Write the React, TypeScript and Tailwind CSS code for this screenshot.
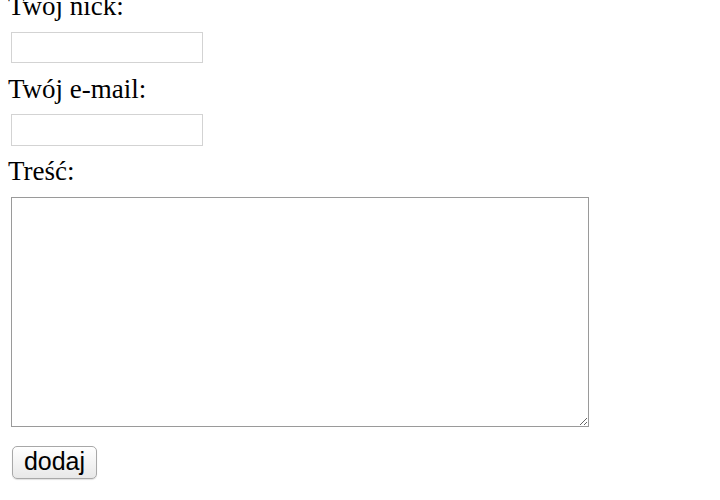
const App = () => {
  return (
    <div className="w-[720px] h-[500px] overflow-hidden bg-white">
      <form className="flex flex-col items-start mt-[-9px] text-[27px] text-black font-['Liberation_Serif','Times_New_Roman',serif]">
        <label className="h-[30px] leading-[30px] pl-[8px]">Twój nick:</label>
        <input
          type="text"
          className="mt-[11px] ml-[11px] w-[192px] h-[31px] border border-[#d3d3d3] bg-white outline-none"
        />
        <label className="mt-[11px] h-[30px] leading-[30px] pl-[8px]">Twój e-mail:</label>
        <input
          type="text"
          className="mt-[10px] ml-[11px] w-[192px] h-[32px] border border-[#d3d3d3] bg-white outline-none"
        />
        <label className="mt-[10px] h-[30px] leading-[30px] pl-[8px]">Treść:</label>
        <textarea className="mt-[11px] ml-[11px] w-[578px] h-[230px] border border-[#9a9a9a] bg-white outline-none resize" />
        <button
          type="button"
          className="mt-[19px] ml-[12px] w-[85px] h-[33px] rounded-[5px] border border-[#a8a8a8] bg-gradient-to-b from-white to-[#e8e8e8] font-['Liberation_Sans',Arial,sans-serif] text-[25px] leading-none text-black shadow-[0_1px_1px_rgba(0,0,0,0.12)] flex items-center justify-center pb-[2px]"
        >
          dodaj
        </button>
      </form>
    </div>
  );
};

export default App;
